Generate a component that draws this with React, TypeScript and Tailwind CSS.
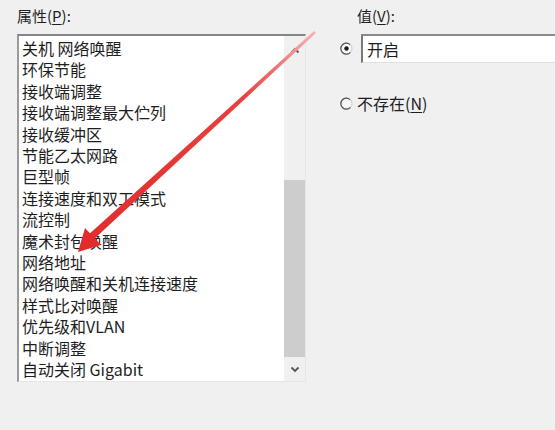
import React from 'react';

const properties = [
  "关机 网络唤醒",
  "环保节能",
  "接收端调整",
  "接收端调整最大伫列",
  "接收缓冲区",
  "节能乙太网路",
  "巨型帧",
  "连接速度和双工模式",
  "流控制",
  "魔术封包唤醒",
  "网络地址",
  "网络唤醒和关机连接速度",
  "样式比对唤醒",
  "优先级和VLAN",
  "中断调整",
  "自动关闭 Gigabit",
];

const Radio: React.FC<{ checked?: boolean }> = ({ checked }) => (
  <svg width="13" height="13" viewBox="0 0 13 13" className="shrink-0">
    <circle cx="6.5" cy="6.5" r="5.5" fill="#f7f7f7" stroke="#c8c8c8" strokeWidth="1" />
    <path d="M10 2.6 A5.5 5.5 0 1 0 10.4 10.4" fill="none" stroke="#555" strokeWidth="1.2" />
    {checked && <circle cx="6.5" cy="6.5" r="2.2" fill="#1a1a1a" />}
  </svg>
);

const Chevron: React.FC<{ up?: boolean }> = ({ up }) => (
  <svg width="10" height="7" viewBox="0 0 10 7">
    <polyline
      points={up ? "1.5,5.5 5,2 8.5,5.5" : "1.5,1.5 5,5 8.5,1.5"}
      fill="none"
      stroke="#555"
      strokeWidth="1.8"
    />
  </svg>
);

const App: React.FC = () => {
  return (
    <div
      className="relative w-[555px] h-[430px] overflow-hidden bg-[#f0f0f0] text-[#1e1e1e]"
      style={{ fontFamily: '"Noto Sans CJK SC", "Noto Sans", sans-serif' }}
    >
      <div className="flex">
        {/* Property list */}
        <div className="pl-[17px] w-[306px] shrink-0">
          <div className="h-[34px] pt-[5px] text-[15px] leading-[22px]">
            属性(<span className="underline underline-offset-2">P</span>):
          </div>
          <div className="flex h-[348px] bg-white border-t-2 border-l-2 border-t-[#858585] border-l-[#9a9a9a] border-r border-b border-r-[#e6e6e6] border-b-[#e6e6e6]">
            <ul className="flex-1 pt-[2px] pl-[3px] text-[16px] leading-[21.4px] whitespace-nowrap">
              {properties.map((p) => (
                <li key={p}>{p}</li>
              ))}
            </ul>
            <div className="w-[21px] flex flex-col bg-[#f0f0f0]">
              <div className="h-[28px] flex items-center justify-center">
                <Chevron up />
              </div>
              <div className="h-[116px]" />
              <div className="h-[177px] bg-[#cdcdcd]" />
              <div className="flex-1 flex items-center justify-center">
                <Chevron />
              </div>
            </div>
          </div>
        </div>

        {/* Value */}
        <div className="flex-1 pl-[34px]">
          <div className="h-[34px] pt-[5px] pl-[17px] text-[15px] leading-[22px]">
            值(<span className="underline underline-offset-2">V</span>):
          </div>
          <div className="flex items-center gap-[8px]">
            <Radio checked />
            <div className="flex-1 h-[29px] flex items-center pl-[4px] bg-white border-t-2 border-l-2 border-t-[#8a8a8a] border-l-[#7a7a7a] border-b border-b-[#e0e0e0] text-[16px]">
              开启
            </div>
          </div>
          <div className="flex items-center gap-[4px] mt-[28px] text-[16px]">
            <Radio />
            <span>
              不存在(<span className="underline underline-offset-2">N</span>)
            </span>
          </div>
        </div>
      </div>

      {/* Red annotation arrow */}
      <svg className="absolute inset-0 pointer-events-none" width="555" height="430" viewBox="0 0 555 430">
        <defs>
          <linearGradient id="arrowFade" x1="313" y1="31" x2="80" y2="250" gradientUnits="userSpaceOnUse">
            <stop offset="0" stopColor="#f4b3b3" />
            <stop offset="0.3" stopColor="#e8413f" />
            <stop offset="1" stopColor="#e12c2c" />
          </linearGradient>
        </defs>
        <polygon points="314,31 316,33 92,241 87,236" fill="url(#arrowFade)" />
        <polygon points="78,252 85,228 101,245" fill="#e12c2c" />
      </svg>
    </div>
  );
};

export default App;
